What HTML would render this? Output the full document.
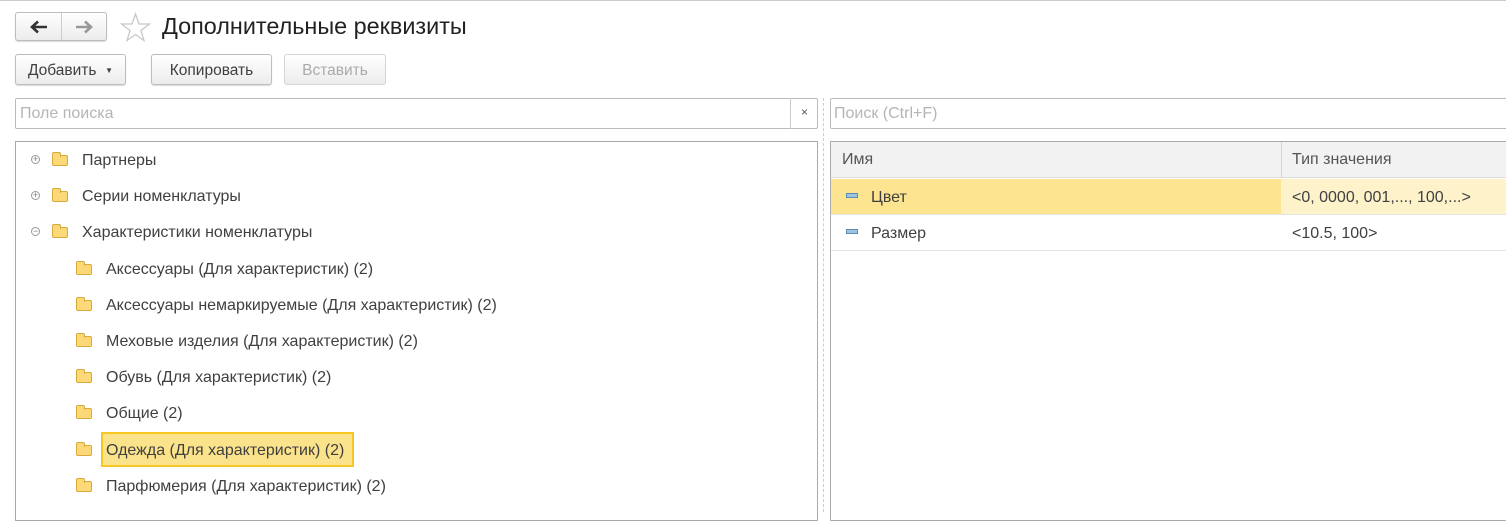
<!DOCTYPE html>
<html><head><meta charset="utf-8"><style>
*{box-sizing:border-box;margin:0;padding:0}
body{width:1506px;height:512px;overflow:hidden;background:#fff;font-family:"Liberation Sans",sans-serif;color:#404040;font-size:16px;position:relative}
.a{position:absolute}
.btn{position:absolute;border:1px solid #bdbdbd;border-radius:3px;background:linear-gradient(#fff,#ececec);box-shadow:0 1px 1px rgba(0,0,0,.15);display:flex;align-items:center;justify-content:center;font-size:15.5px;color:#404040;padding-top:2px}
.row{position:absolute;height:20px;line-height:22px;white-space:nowrap}
.fold{position:absolute;width:16px;height:11px;border:1px solid #d9a93a;background:#fbd978;border-radius:2px}
.fold:before{content:"";position:absolute;left:-1px;top:-4px;width:7px;height:4px;border:1px solid #d9a93a;border-bottom:none;background:#fbd978;border-radius:2px 2px 0 0}
.exp{position:absolute;width:9px;height:9px;border:1px solid #999;border-radius:50%;font-size:9px;line-height:7px;text-align:center;color:#777}
.dash{position:absolute;width:12px;height:5px;background:#9cc3e0;border:1px solid #5d8db5}
</style></head><body>
<div class="a" style="left:0;top:0;width:1506px;height:1px;background:#ccc"></div>
<div class="btn" style="left:15px;top:12px;width:92px;height:29px;justify-content:flex-start;padding-top:0">
 <div style="width:46px;height:27px;display:flex;align-items:center;justify-content:center"><svg width="18" height="14" viewBox="0 0 18 14"><path d="M17 7H3M8 1.5L2 7l6 5.5" fill="none" stroke="#333" stroke-width="2.6"/></svg></div>
 <div style="width:1px;height:27px;background:#ccc"></div>
 <div style="width:45px;height:27px;display:flex;align-items:center;justify-content:center"><svg width="18" height="14" viewBox="0 0 18 14"><path d="M1 7h14M10 1.5L16 7l-6 5.5" fill="none" stroke="#999" stroke-width="2.6"/></svg></div>
</div>
<svg class="a" style="left:120px;top:12px" width="31" height="30" viewBox="0 0 31 30"><polygon points="15.5,2 19,12 29.5,12 21,18.5 24,28.5 15.5,22.5 7,28.5 10,18.5 1.5,12 12,12" fill="none" stroke="#c8c8c8" stroke-width="1.3"/></svg>
<div class="a" style="left:162px;top:13px;font-size:23.4px;color:#222">Дополнительные реквизиты</div>
<div class="btn" style="left:15px;top:54px;width:111px;height:31px">Добавить&nbsp;&nbsp;<span style="font-size:8px">&#9660;</span></div>
<div class="btn" style="left:151px;top:54px;width:121px;height:31px">Копировать</div>
<div class="btn" style="left:284px;top:54px;width:102px;height:31px;color:#aaa;border-color:#d5d5d5;box-shadow:none">Вставить</div>
<div class="a" style="left:15px;top:98px;width:803px;height:31px;border:1px solid #bbb;border-radius:2px"></div>
<div class="a" style="left:20px;top:105px;color:#b5b5b5">Поле поиска</div>
<div class="a" style="left:790px;top:98px;width:28px;height:31px;border-left:1px solid #ccc;text-align:center;line-height:29px;font-size:12px;color:#555">×</div>
<div class="a" style="left:823px;top:98px;height:414px;border-left:1px dashed #ccc"></div>
<div class="a" style="left:830px;top:98px;width:690px;height:31px;border:1px solid #bbb;border-radius:2px"></div>
<div class="a" style="left:834px;top:105px;color:#b5b5b5">Поиск (Ctrl+F)</div>
<div class="a" style="left:15px;top:141px;width:803px;height:380px;border:1px solid #aaa"></div>
<div class="exp" style="left:31px;top:155px">+</div><div class="fold" style="left:52px;top:155px"></div><div class="row" style="left:82px;top:150px">Партнеры</div>
<div class="exp" style="left:31px;top:191px">+</div><div class="fold" style="left:52px;top:191px"></div><div class="row" style="left:82px;top:186px">Серии номенклатуры</div>
<div class="exp" style="left:31px;top:227px">−</div><div class="fold" style="left:52px;top:227px"></div><div class="row" style="left:82px;top:222px">Характеристики номенклатуры</div>
<div class="fold" style="left:76px;top:264px"></div><div class="row" style="left:106px;top:259px">Аксессуары (Для характеристик) (2)</div>
<div class="fold" style="left:76px;top:300px"></div><div class="row" style="left:106px;top:295px">Аксессуары немаркируемые (Для характеристик) (2)</div>
<div class="fold" style="left:76px;top:336px"></div><div class="row" style="left:106px;top:331px">Меховые изделия (Для характеристик) (2)</div>
<div class="fold" style="left:76px;top:372px"></div><div class="row" style="left:106px;top:367px">Обувь (Для характеристик) (2)</div>
<div class="fold" style="left:76px;top:408px"></div><div class="row" style="left:106px;top:403px">Общие (2)</div>
<div class="a" style="left:101px;top:432px;width:253px;height:35px;background:#fbe38c;border:2px solid #f6c623"></div>
<div class="fold" style="left:76px;top:445px"></div><div class="row" style="left:106px;top:440px">Одежда (Для характеристик) (2)</div>
<div class="fold" style="left:76px;top:481px"></div><div class="row" style="left:106px;top:476px">Парфюмерия (Для характеристик) (2)</div>
<div class="a" style="left:830px;top:141px;width:690px;height:380px;border:1px solid #aaa"></div>
<div class="a" style="left:831px;top:142px;width:680px;height:36px;background:#f2f2f2;border-bottom:1px solid #ddd"></div>
<div class="a" style="left:1281px;top:142px;width:1px;height:36px;background:#d5d5d5"></div>
<div class="row" style="left:842px;top:149px;color:#555">Имя</div>
<div class="row" style="left:1292px;top:149px;color:#555">Тип значения</div>
<div class="a" style="left:831px;top:179px;width:450px;height:35px;background:#fde490"></div>
<div class="a" style="left:1281px;top:179px;width:230px;height:35px;background:#fdf2c9"></div>
<div class="dash" style="left:846px;top:193px"></div><div class="row" style="left:871px;top:187px">Цвет</div>
<div class="row" style="left:1292px;top:187px">&lt;0, 0000, 001,..., 100,...&gt;</div>
<div class="a" style="left:831px;top:214px;width:680px;height:1px;background:#e5e5e5"></div>
<div class="dash" style="left:846px;top:229px"></div><div class="row" style="left:871px;top:223px">Размер</div>
<div class="row" style="left:1292px;top:223px">&lt;10.5, 100&gt;</div>
<div class="a" style="left:831px;top:250px;width:680px;height:1px;background:#e5e5e5"></div>
</body></html>
